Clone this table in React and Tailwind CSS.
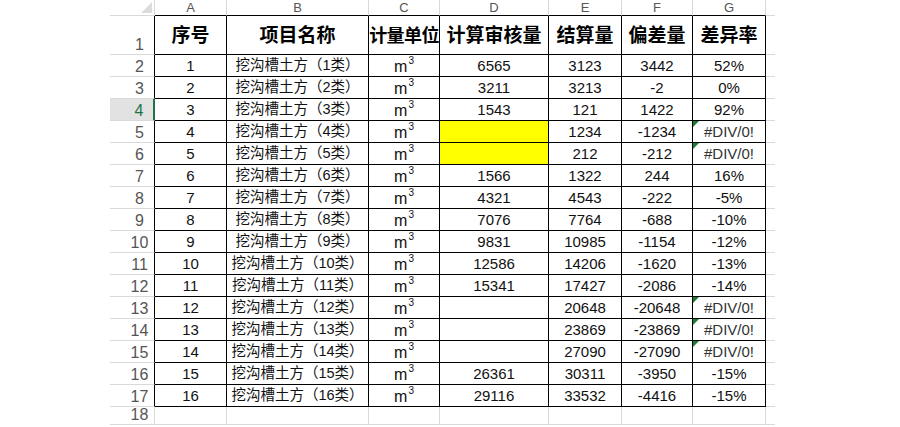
const font = "font-['Liberation_Sans','Noto_Sans_CJK_SC',sans-serif]";

// widths: row header, A..G, partial H
const W = ["w-[45px]", "w-[72px]", "w-[142px]", "w-[71px]", "w-[109px]", "w-[73px]", "w-[71px]", "w-[73px]", "w-[9px]"];
const letters = ["A", "B", "C", "D", "E", "F", "G"];
const heads = ["序号", "项目名称", "计量单位", "计算审核量", "结算量", "偏差量", "差异率"];

const data = [
  ["6565", "3123", "3442", "52%"],
  ["3211", "3213", "-2", "0%"],
  ["1543", "121", "1422", "92%"],
  [null, "1234", "-1234", "#DIV/0!"],
  [null, "212", "-212", "#DIV/0!"],
  ["1566", "1322", "244", "16%"],
  ["4321", "4543", "-222", "-5%"],
  ["7076", "7764", "-688", "-10%"],
  ["9831", "10985", "-1154", "-12%"],
  ["12586", "14206", "-1620", "-13%"],
  ["15341", "17427", "-2086", "-14%"],
  ["", "20648", "-20648", "#DIV/0!"],
  ["", "23869", "-23869", "#DIV/0!"],
  ["", "27090", "-27090", "#DIV/0!"],
  ["26361", "30311", "-3950", "-15%"],
  ["29116", "33532", "-4416", "-15%"],
];

function RowHead({ n, h, active, last }) {
  return (
    <div
      className={`${W[0]} ${h} shrink-0 flex items-end justify-center pl-[15px] pb-[1px] border-b border-[#d9d9d9] ${
        active
          ? "bg-[#e2e2e2] text-[#217346] border-r-2 border-r-[#217346]"
          : last
          ? "text-[#555] border-r border-r-[#d9d9d9]"
          : "text-[#555] border-r border-r-black"
      } text-[16px] leading-none`}
    >
      {n}
    </div>
  );
}

function Cell({ i, children, className = "" }) {
  return (
    <div
      className={`${W[i]} h-full shrink-0 relative flex items-center justify-center border-r border-b border-black whitespace-nowrap overflow-hidden ${className}`}
    >
      {children}
    </div>
  );
}

function Err() {
  return (
    <span className="absolute top-0 left-0 w-0 h-0 border-t-[6px] border-r-[6px] border-t-[#1e7b34] border-r-transparent" />
  );
}

export default function App() {
  return (
    <div className={`w-[900px] h-[427px] bg-white overflow-hidden flex ${font}`}>
      <div className="w-[110px] shrink-0" />
      <div className="flex flex-col text-[#111]">
        {/* column letters */}
        <div className="flex h-[16px]">
          <div className={`${W[0]} h-full relative border-r border-b border-[#d9d9d9]`}>
            <span className="absolute bottom-[2px] right-[2px] w-0 h-0 border-b-[11px] border-l-[11px] border-b-[#dcdcdc] border-l-transparent" />
          </div>
          {letters.map((l, k) => (
            <div
              key={l}
              className={`${W[k + 1]} h-full flex items-center justify-center text-[13px] leading-none text-[#555] border-r border-r-[#d9d9d9] border-b border-b-black`}
            >
              {l}
            </div>
          ))}
          <div className={`${W[8]} h-full border-b border-[#d9d9d9]`} />
        </div>

        {/* row 1 headings */}
        <div className="flex h-[39px]">
          <RowHead n="1" h="h-full" />
          {heads.map((t, k) => (
            <Cell
              key={t}
              i={k + 1}
              className={`font-bold text-black pt-[2px] ${k === 2 ? "text-[18px] tracking-[-0.6px]" : "text-[19px]"}`}
            >
              {t}
            </Cell>
          ))}
          <div className={`${W[8]} h-full border-b border-[#d9d9d9]`} />
        </div>

        {data.map((r, idx) => {
          const [d, e, f, g] = r;
          const n = idx + 1;
          return (
            <div key={n} className="flex h-[22px] text-[15px] leading-none">
              <RowHead n={n + 1} h="h-full" active={n + 1 === 4} />
              <Cell i={1}>{n}</Cell>
              <Cell i={2} className="text-[14.5px]">挖沟槽土方（{n}类）</Cell>
              <Cell i={3}>
                <span className="text-[16px] leading-none pt-[3px]">
                  m<span className="text-[10px] align-top relative top-[-3px] ml-[1px]">3</span>
                </span>
              </Cell>
              <Cell i={4} className={d === null ? "bg-[#ffff00]" : ""}>{d}</Cell>
              <Cell i={5}>{e}</Cell>
              <Cell i={6}>{f}</Cell>
              <Cell i={7} className={g.startsWith("#") ? "text-[#333]" : ""}>
                {g.startsWith("#") && <Err />}
                {g}
              </Cell>
              <div className={`${W[8]} h-full border-b border-[#d9d9d9]`} />
            </div>
          );
        })}

        {/* row 18 */}
        <div className="flex h-[18px]">
          <RowHead n="18" h="h-full" last />
          {letters.map((l, k) => (
            <div key={l} className={`${W[k + 1]} h-full border-r border-b border-[#d9d9d9]`} />
          ))}
          <div className={`${W[8]} h-full border-b border-[#d9d9d9]`} />
        </div>
      </div>
    </div>
  );
}
